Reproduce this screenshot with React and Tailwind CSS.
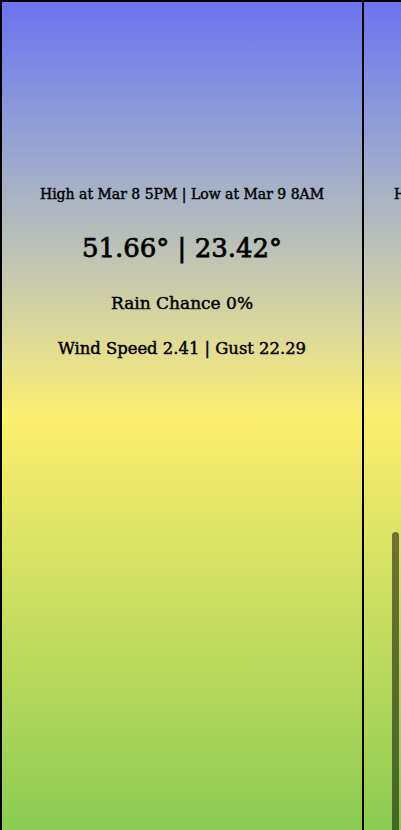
import React from "react";

const days = [
  {
    when: "High at Mar 8 5PM | Low at Mar 9 8AM",
    temps: "51.66° | 23.42°",
    rain: "Rain Chance 0%",
    wind: "Wind Speed 2.41 | Gust 22.29",
  },
  {
    when: "High at Mar 9 12PM | Low at Mar 10 7AM",
    temps: "48.20° | 25.11°",
    rain: "Rain Chance 10%",
    wind: "Wind Speed 3.12 | Gust 18.40",
  },
];

function Card({ d, first }) {
  return (
    <div
      className={
        "relative shrink-0 w-[364px] h-[830px] border-t-2 border-r-2 border-black bg-gradient-to-b from-[#6b73ef] via-[#fdee6e] to-[#8acb52] flex flex-col items-center text-black [-webkit-text-stroke:0.45px_black] " +
        (first ? "border-l-2" : "")
      }
      style={{ fontFamily: '"DejaVu Serif", serif' }}
    >
      <div className="mt-[182px] text-[14px] leading-[20px] whitespace-nowrap">{d.when}</div>
      <div className="mt-[26px] text-[26px] leading-[36px] font-medium whitespace-nowrap [-webkit-text-stroke:0.75px_black]">{d.temps}</div>
      <div className="mt-[25px] text-[17px] leading-[24px] whitespace-nowrap">{d.rain}</div>
      <div className="mt-[22px] text-[16.4px] leading-[24px] whitespace-nowrap">{d.wind}</div>
    </div>
  );
}

export default function App() {
  return (
    <div className="relative w-[401px] h-[830px] overflow-hidden bg-white">
      <div className="flex flex-row">
        {days.map((d, i) => (
          <Card key={i} d={d} first={i === 0} />
        ))}
      </div>
      <div className="absolute left-[392px] top-[532px] w-[7px] h-[298px] rounded-t-full bg-black/50" />
    </div>
  );
}
